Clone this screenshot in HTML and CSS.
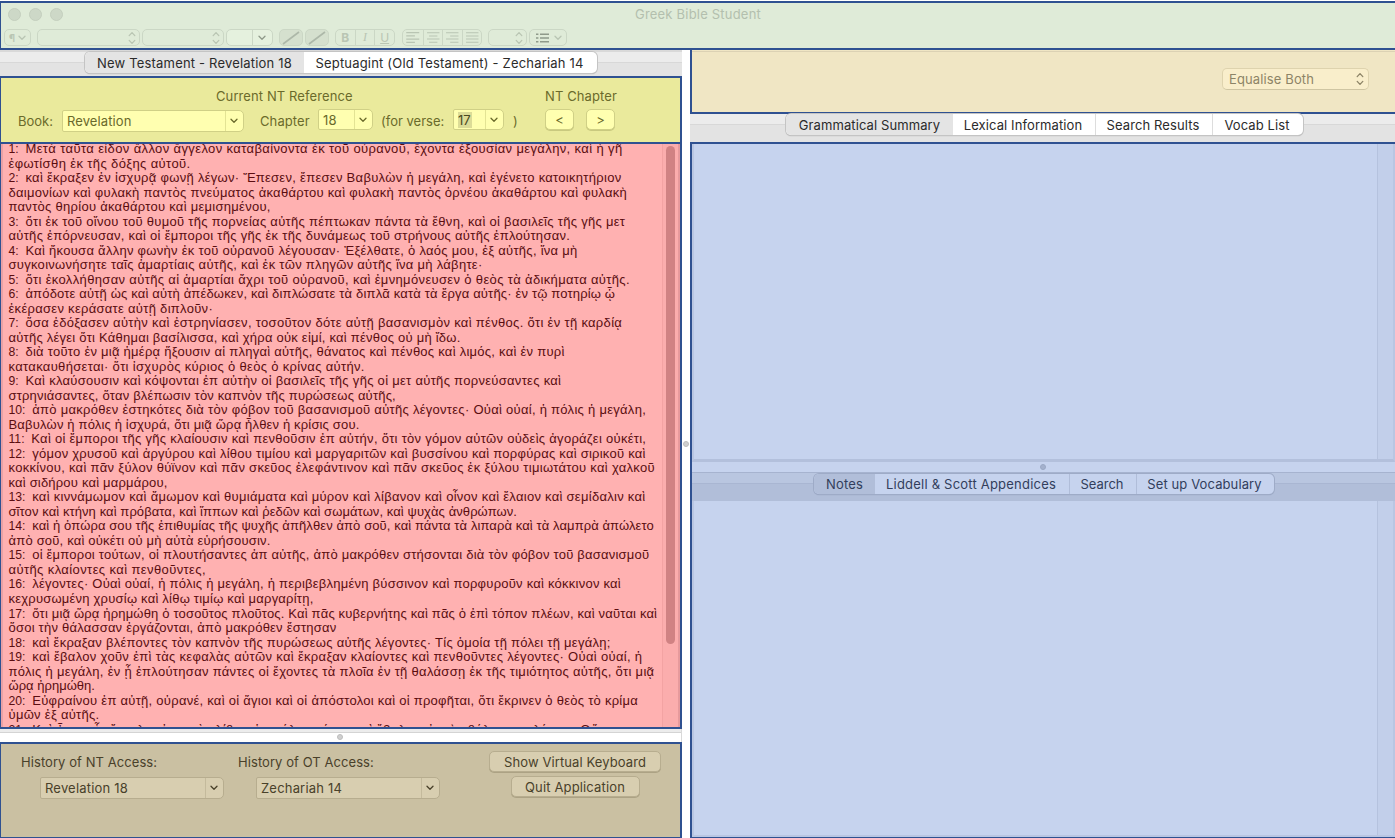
FILE: index.html
```html
<!DOCTYPE html>
<html lang="en">
<head>
<meta charset="utf-8">
<title>Greek Bible Student</title>
<link rel="stylesheet" href="styles.css">
</head>
<body>
<svg width="0" height="0" class="defs">
<symbol id="chev" viewBox="0 0 8 6"><path d="M1 1.2 4 4.2 7 1.2" fill="none" stroke="currentColor" stroke-width="1.3" stroke-linecap="round" stroke-linejoin="round"/></symbol>
<symbol id="updown" viewBox="0 0 8 14"><path d="M1.2 4.6 4 1.6 6.8 4.6M1.2 9.4 4 12.4 6.8 9.4" fill="none" stroke="currentColor" stroke-width="1.3" stroke-linecap="round" stroke-linejoin="round"/></symbol>
<symbol id="slash" viewBox="0 0 22 16"><path d="M3 14 19 2" fill="none" stroke="currentColor" stroke-width="1.6"/></symbol>
</svg>
<div class="app">
<header class="titlebar">
<div class="titlerow"><div class="lights"><i></i><i></i><i></i></div><h1>Greek Bible Student</h1></div>
<div class="toolbar">
<div class="tb tb-para"><span>¶</span><svg class="chev"><use href="#chev"/></svg></div>
<div class="tb tb-font"><svg class="ud"><use href="#updown"/></svg></div>
<div class="tb tb-face"><svg class="ud"><use href="#updown"/></svg></div>
<div class="tb tb-size"><svg class="chev"><use href="#chev"/></svg></div>
<div class="tb tb-well well1"><svg><use href="#slash"/></svg></div>
<div class="tb tb-well well2"><svg><use href="#slash"/></svg></div>
<div class="tb tb-biu"><b>B</b><em>I</em><u>U</u></div>
<div class="tb tb-align">
<svg viewBox="0 0 14 12"><path d="M1 1.5h12M1 4.5h8M1 7.5h12M1 10.5h8"/></svg>
<svg viewBox="0 0 14 12"><path d="M1 1.5h12M3 4.5h8M1 7.5h12M3 10.5h8"/></svg>
<svg viewBox="0 0 14 12"><path d="M1 1.5h12M5 4.5h8M1 7.5h12M5 10.5h8"/></svg>
<svg viewBox="0 0 14 12"><path d="M1 1.5h12M1 4.5h12M1 7.5h12M1 10.5h12"/></svg>
</div>
<div class="tb tb-space"><svg class="ud"><use href="#updown"/></svg></div>
<div class="tb tb-list"><svg class="list" viewBox="0 0 13 10"><path d="M0 1.2h2.4M0 5h2.4M0 8.8h2.4M4 1.2h9M4 5h9M4 8.8h9"/></svg><svg class="chev"><use href="#chev"/></svg></div>
</div>
</header>
<div class="body">
<main class="left">
<div class="tabstrip strip-l"><div class="tabs">
<div class="tab on t1">New Testament - Revelation 18</div>
<div class="tab t2">Septuagint (Old Testament) - Zechariah 14</div>
</div></div>
<section class="reference">
<div class="refhead"><span class="rh1">Current NT Reference</span><span class="rh2">NT Chapter</span></div>
<div class="refrow">
<label class="l-book">Book:</label>
<div class="combo c-book"><span>Revelation</span><svg class="chev"><use href="#chev"/></svg></div>
<label class="l-chap">Chapter</label>
<div class="combo c-chap"><span>18</span><svg class="chev"><use href="#chev"/></svg></div>
<label class="l-verse">(for verse:</label>
<div class="combo c-verse"><span class="sel">17</span><svg class="chev"><use href="#chev"/></svg></div>
<label class="l-close">)</label>
<button class="btn b-prev">&lt;</button>
<button class="btn b-next">&gt;</button>
</div>
</section>
<section class="verses" lang="el">
<div class="lines">
<p><b>1:  </b>Μετὰ ταῦτα εἶδον ἄλλον ἄγγελον καταβαίνοντα ἐκ τοῦ οὐρανοῦ, ἔχοντα ἐξουσίαν μεγάλην, καὶ ἡ γῆ</p>
<p>ἐφωτίσθη ἐκ τῆς δόξης αὐτοῦ.</p>
<p><b>2:  </b>καὶ ἔκραξεν ἐν ἰσχυρᾷ φωνῇ λέγων· Ἔπεσεν, ἔπεσεν Βαβυλὼν ἡ μεγάλη, καὶ ἐγένετο κατοικητήριον</p>
<p>δαιμονίων καὶ φυλακὴ παντὸς πνεύματος ἀκαθάρτου καὶ φυλακὴ παντὸς ὀρνέου ἀκαθάρτου καὶ φυλακὴ</p>
<p>παντὸς θηρίου ἀκαθάρτου καὶ μεμισημένου,</p>
<p><b>3:  </b>ὅτι ἐκ τοῦ οἴνου τοῦ θυμοῦ τῆς πορνείας αὐτῆς πέπτωκαν πάντα τὰ ἔθνη, καὶ οἱ βασιλεῖς τῆς γῆς μετ</p>
<p>αὐτῆς ἐπόρνευσαν, καὶ οἱ ἔμποροι τῆς γῆς ἐκ τῆς δυνάμεως τοῦ στρήνους αὐτῆς ἐπλούτησαν.</p>
<p><b>4:  </b>Καὶ ἤκουσα ἄλλην φωνὴν ἐκ τοῦ οὐρανοῦ λέγουσαν· Ἐξέλθατε, ὁ λαός μου, ἐξ αὐτῆς, ἵνα μὴ</p>
<p>συγκοινωνήσητε ταῖς ἁμαρτίαις αὐτῆς, καὶ ἐκ τῶν πληγῶν αὐτῆς ἵνα μὴ λάβητε·</p>
<p><b>5:  </b>ὅτι ἐκολλήθησαν αὐτῆς αἱ ἁμαρτίαι ἄχρι τοῦ οὐρανοῦ, καὶ ἐμνημόνευσεν ὁ θεὸς τὰ ἀδικήματα αὐτῆς.</p>
<p><b>6:  </b>ἀπόδοτε αὐτῇ ὡς καὶ αὐτὴ ἀπέδωκεν, καὶ διπλώσατε τὰ διπλᾶ κατὰ τὰ ἔργα αὐτῆς· ἐν τῷ ποτηρίῳ ᾧ</p>
<p>ἐκέρασεν κεράσατε αὐτῇ διπλοῦν·</p>
<p><b>7:  </b>ὅσα ἐδόξασεν αὑτὴν καὶ ἐστρηνίασεν, τοσοῦτον δότε αὐτῇ βασανισμὸν καὶ πένθος. ὅτι ἐν τῇ καρδίᾳ</p>
<p>αὐτῆς λέγει ὅτι Κάθημαι βασίλισσα, καὶ χήρα οὐκ εἰμί, καὶ πένθος οὐ μὴ ἴδω.</p>
<p><b>8:  </b>διὰ τοῦτο ἐν μιᾷ ἡμέρᾳ ἥξουσιν αἱ πληγαὶ αὐτῆς, θάνατος καὶ πένθος καὶ λιμός, καὶ ἐν πυρὶ</p>
<p>κατακαυθήσεται· ὅτι ἰσχυρὸς κύριος ὁ θεὸς ὁ κρίνας αὐτήν.</p>
<p><b>9:  </b>Καὶ κλαύσουσιν καὶ κόψονται ἐπ αὐτὴν οἱ βασιλεῖς τῆς γῆς οἱ μετ αὐτῆς πορνεύσαντες καὶ</p>
<p>στρηνιάσαντες, ὅταν βλέπωσιν τὸν καπνὸν τῆς πυρώσεως αὐτῆς,</p>
<p><b>10:  </b>ἀπὸ μακρόθεν ἑστηκότες διὰ τὸν φόβον τοῦ βασανισμοῦ αὐτῆς λέγοντες· Οὐαὶ οὐαί, ἡ πόλις ἡ μεγάλη,</p>
<p>Βαβυλὼν ἡ πόλις ἡ ἰσχυρά, ὅτι μιᾷ ὥρᾳ ἦλθεν ἡ κρίσις σου.</p>
<p><b>11:  </b>Καὶ οἱ ἔμποροι τῆς γῆς κλαίουσιν καὶ πενθοῦσιν ἐπ αὐτήν, ὅτι τὸν γόμον αὐτῶν οὐδεὶς ἀγοράζει οὐκέτι,</p>
<p><b>12:  </b>γόμον χρυσοῦ καὶ ἀργύρου καὶ λίθου τιμίου καὶ μαργαριτῶν καὶ βυσσίνου καὶ πορφύρας καὶ σιρικοῦ καὶ</p>
<p>κοκκίνου, καὶ πᾶν ξύλον θύϊνον καὶ πᾶν σκεῦος ἐλεφάντινον καὶ πᾶν σκεῦος ἐκ ξύλου τιμιωτάτου καὶ χαλκοῦ</p>
<p>καὶ σιδήρου καὶ μαρμάρου,</p>
<p><b>13:  </b>καὶ κιννάμωμον καὶ ἄμωμον καὶ θυμιάματα καὶ μύρον καὶ λίβανον καὶ οἶνον καὶ ἔλαιον καὶ σεμίδαλιν καὶ</p>
<p>σῖτον καὶ κτήνη καὶ πρόβατα, καὶ ἵππων καὶ ῥεδῶν καὶ σωμάτων, καὶ ψυχὰς ἀνθρώπων.</p>
<p><b>14:  </b>καὶ ἡ ὀπώρα σου τῆς ἐπιθυμίας τῆς ψυχῆς ἀπῆλθεν ἀπὸ σοῦ, καὶ πάντα τὰ λιπαρὰ καὶ τὰ λαμπρὰ ἀπώλετο</p>
<p>ἀπὸ σοῦ, καὶ οὐκέτι οὐ μὴ αὐτὰ εὑρήσουσιν.</p>
<p><b>15:  </b>οἱ ἔμποροι τούτων, οἱ πλουτήσαντες ἀπ αὐτῆς, ἀπὸ μακρόθεν στήσονται διὰ τὸν φόβον τοῦ βασανισμοῦ</p>
<p>αὐτῆς κλαίοντες καὶ πενθοῦντες,</p>
<p><b>16:  </b>λέγοντες· Οὐαὶ οὐαί, ἡ πόλις ἡ μεγάλη, ἡ περιβεβλημένη βύσσινον καὶ πορφυροῦν καὶ κόκκινον καὶ</p>
<p>κεχρυσωμένη χρυσίῳ καὶ λίθῳ τιμίῳ καὶ μαργαρίτῃ,</p>
<p><b>17:  </b>ὅτι μιᾷ ὥρᾳ ἠρημώθη ὁ τοσοῦτος πλοῦτος. Καὶ πᾶς κυβερνήτης καὶ πᾶς ὁ ἐπὶ τόπον πλέων, καὶ ναῦται καὶ</p>
<p>ὅσοι τὴν θάλασσαν ἐργάζονται, ἀπὸ μακρόθεν ἔστησαν</p>
<p><b>18:  </b>καὶ ἔκραξαν βλέποντες τὸν καπνὸν τῆς πυρώσεως αὐτῆς λέγοντες· Τίς ὁμοία τῇ πόλει τῇ μεγάλῃ;</p>
<p><b>19:  </b>καὶ ἔβαλον χοῦν ἐπὶ τὰς κεφαλὰς αὐτῶν καὶ ἔκραξαν κλαίοντες καὶ πενθοῦντες λέγοντες· Οὐαὶ οὐαί, ἡ</p>
<p>πόλις ἡ μεγάλη, ἐν ᾗ ἐπλούτησαν πάντες οἱ ἔχοντες τὰ πλοῖα ἐν τῇ θαλάσσῃ ἐκ τῆς τιμιότητος αὐτῆς, ὅτι μιᾷ</p>
<p>ὥρᾳ ἠρημώθη.</p>
<p><b>20:  </b>Εὐφραίνου ἐπ αὐτῇ, οὐρανέ, καὶ οἱ ἅγιοι καὶ οἱ ἀπόστολοι καὶ οἱ προφῆται, ὅτι ἔκρινεν ὁ θεὸς τὸ κρίμα</p>
<p>ὑμῶν ἐξ αὐτῆς.</p>
<p><b>21:  </b>Καὶ ἦρεν εἷς ἄγγελος ἰσχυρὸς λίθον ὡς μύλον μέγαν καὶ ἔβαλεν εἰς τὴν θάλασσαν λέγων· Οὕτως</p>
</div>
<div class="scroll"><i></i></div>
</section>
<div class="splitter split-l"><i></i></div>
<section class="history">
<div class="hist h1c"><label>History of NT Access:</label><div class="combo"><span>Revelation 18</span><svg class="chev"><use href="#chev"/></svg></div></div>
<div class="hist h2c"><label>History of OT Access:</label><div class="combo"><span>Zechariah 14</span><svg class="chev"><use href="#chev"/></svg></div></div>
<div class="actions"><button class="btn a1">Show Virtual Keyboard</button><button class="btn a2">Quit Application</button></div>
</section>
</main>
<div class="vsplit"><i></i></div>
<aside class="right">
<section class="options"><div class="popup"><span>Equalise Both</span><svg class="ud"><use href="#updown"/></svg></div></section>
<div class="tabstrip strip-r"><div class="tabs">
<div class="tab on r1">Grammatical Summary</div>
<div class="tab r2">Lexical Information</div>
<div class="tab r3">Search Results</div>
<div class="tab r4">Vocab List</div>
</div></div>
<section class="results">
<div class="pane p1"><div class="gutter"></div></div>
<div class="splitter split-r"><i></i></div>
<div class="tabstrip strip-b"><div class="tabs">
<div class="tab on n1">Notes</div>
<div class="tab n2">Liddell &amp; Scott Appendices</div>
<div class="tab n3">Search</div>
<div class="tab n4">Set up Vocabulary</div>
</div></div>
<div class="pane p2"><div class="gutter"></div></div>
</section>
</aside>
</div>
</div>
</body>
</html>
```
FILE: styles.css
```css
* { box-sizing: border-box; }
body { margin: 0; font: 13px/16px Inter, "Liberation Sans", sans-serif; letter-spacing: 0.1px; color: #2b2b2b; background: #fff; }
h1, p { margin: 0; font-weight: inherit; font-size: inherit; }
.defs { position: absolute; }
svg { display: block; flex: none; }
.chev { width: 8px; height: 6px; }
.ud { width: 8px; height: 14px; }
.app { width: 1395px; height: 838px; overflow: hidden; display: flex; flex-direction: column; padding-top: 1px; --line: #2f5191; }

.titlebar { height: 49px; border: 2px solid var(--line); border-width: 2px 0 2px 1px; background: #dfebd8; color: #b3bfae; }
.titlerow { height: 24px; display: flex; align-items: center; padding: 0 0 2px 7px; }
.lights { display: flex; gap: 8px; width: 61px; }
.lights i { width: 13px; height: 13px; border-radius: 50%; background: #cdd8c7; border: 1px solid #c4cfbe; }
h1 { margin-left: 566px; letter-spacing: 0.206px; white-space: nowrap; }
.toolbar { display: flex; padding: 2px 0 0 3px; color: #b9c5b3; }
.tb { height: 17px; border: 1px solid #cbd7c5; border-radius: 5px; display: flex; align-items: center; justify-content: flex-end; flex: none; }
.tb-para { width: 27px; justify-content: center; gap: 3px; font-weight: 700; font-size: 10px; }
.tb-font { width: 103px; margin-left: 6px; padding-right: 3px; }
.tb-face { width: 82px; margin-left: 2px; padding-right: 3px; }
.tb-size { width: 47px; margin-left: 2px; padding-right: 6px; color: #8f9a8a; background: linear-gradient(90deg, transparent 25px, #cbd7c5 25px, #cbd7c5 26px, transparent 26px), #e5f1de; }
.tb-well { width: 24px; background: #d5e0ce; justify-content: center; color: #adb8a8; }
.tb-well svg { width: 22px; height: 16px; }
.well1 { margin-left: 6px; }
.well2 { margin-left: 2px; }
.tb-biu { width: 60px; margin-left: 6px; font-size: 12px; }
.tb-biu > * { flex: 1; text-align: center; line-height: 15px; }
.tb-biu em { font-family: "Liberation Serif", serif; border: 1px solid #cbd7c5; border-width: 0 1px; }
.tb-align { width: 73px; margin-left: 7px; width: 80px; }
.tb-align svg { width: 19.5px; height: 15px; padding: 1px 2px; border-left: 1px solid #cbd7c5; }
.tb-align svg:first-child { border: 0; }
.tb-align path, .list path { fill: none; stroke: currentColor; stroke-width: 1; }
.tb-space { width: 39px; margin-left: 6px; padding-right: 3px; }
.tb-list { width: 38px; margin-left: 2px; padding: 0 4px 0 6px; justify-content: space-between; }
.list { width: 13px; height: 10px; color: #8f9a8a; }
.list path { stroke-width: 1.5; }

.body { flex: 1; display: flex; min-height: 0; }
.left { width: 682px; display: flex; flex-direction: column; }
.tabstrip { display: flex; flex: none; background: linear-gradient(#ececec 0 10px, #d8d8d8 10px 11px, #e3e3e3 11px); }
.tabs { display: flex; height: 21px; border-radius: 5px; background: #fff; box-shadow: 0 0 0 1px #c4c4c4, 0 1px 1px #999; overflow: hidden; }
.tab { display: flex; align-items: center; justify-content: center; white-space: nowrap; border-left: 1px solid #ddd; padding-right: 2px; }
.tab.on { background: #e4e4e4; border: 0; padding-right: 0; }
.tab.on + .tab { border: 0; }
.strip-l { height: 26px; border-top: 2px solid #d9d9d9; padding-left: 85px; letter-spacing: 0.188px; }
.t1 { width: 219px; }
.t2 { width: 293px; }

.reference { height: 68px; border: 2px solid var(--line); border-left-width: 1px; background: #eaea9c; color: #6a6a2b; flex: none; margin-bottom: -2px; }
.refhead { display: flex; height: 31px; padding: 10px 0 0 215px; }
.rh1 { width: 329px; }
.refrow { display: flex; height: 23px; padding-left: 17px; align-items: flex-start; }
.refrow label { margin-top: 4px; white-space: nowrap; flex: none; }
.combo { display: flex; align-items: center; justify-content: space-between; height: 22px; border: 1px solid #d0d086; border-radius: 2px 5px 5px 2px; padding: 0 5px 0 4px; flex: none; background: linear-gradient(270deg, transparent 17px, #e3e394 17px 18px, transparent 18px), #ffffb0; }
.refrow .l-book { width: 44px; letter-spacing: 0; }
.c-book { width: 182px; margin-top: 1px; }
.l-chap { width: 58px; margin-left: 16px; }
.c-chap { width: 55px; height: 21px; letter-spacing: 0.3px; }
.l-verse { width: 72px; margin-left: 8px; letter-spacing: 0; }
.c-verse { width: 51px; height: 21px; letter-spacing: 0; }
.c-verse .sel { background: #dcdc97; padding-right: 1px; color: #4b4b22; }
.l-close { margin-left: 9px; width: 32px; }
.btn { font: inherit; letter-spacing: inherit; color: inherit; border: 1px solid #d0d086; border-radius: 5px; background: #ffffb0; padding: 0; height: 21px; display: flex; align-items: center; justify-content: center; box-shadow: 0 1px 0 #c9c97f; }
.b-prev { width: 29px; }
.b-next { width: 29px; margin-left: 12px; }

.verses { height: 587px; border: 2px solid var(--line); border-left-width: 1px; background: #ffb1b1; color: #5a0d10; display: flex; justify-content: space-between; overflow: hidden; flex: none; box-shadow: inset 2px 0 #e9a1a6; }
.lines { padding-left: 7.5px; font: 13px/14.53px "Liberation Sans", Arial, sans-serif; margin-top: -2px; }
.lines p { height: 14.53px; white-space: pre; }
.lines b { font-weight: 400; font-size: 12.2px; letter-spacing: 0; }
.lines p:nth-child(1) { letter-spacing: 0.378px; }
.lines p:nth-child(2) { letter-spacing: 0.38px; }
.lines p:nth-child(3) { letter-spacing: 0.295px; }
.lines p:nth-child(4) { letter-spacing: 0.28px; }
.lines p:nth-child(5) { letter-spacing: 0.282px; }
.lines p:nth-child(6) { letter-spacing: 0.294px; }
.lines p:nth-child(7) { letter-spacing: 0.286px; }
.lines p:nth-child(8) { letter-spacing: 0.278px; }
.lines p:nth-child(9) { letter-spacing: 0.285px; }
.lines p:nth-child(10) { letter-spacing: 0.348px; }
.lines p:nth-child(11) { letter-spacing: 0.165px; }
.lines p:nth-child(12) { letter-spacing: 0.295px; }
.lines p:nth-child(13) { letter-spacing: 0.313px; }
.lines p:nth-child(14) { letter-spacing: 0.231px; }
.lines p:nth-child(15) { letter-spacing: 0.261px; }
.lines p:nth-child(16) { letter-spacing: 0.327px; }
.lines p:nth-child(17) { letter-spacing: 0.297px; }
.lines p:nth-child(18) { letter-spacing: 0.186px; }
.lines p:nth-child(19) { letter-spacing: 0.282px; }
.lines p:nth-child(20) { letter-spacing: 0.162px; }
.lines p:nth-child(21) { letter-spacing: 0.28px; }
.lines p:nth-child(22) { letter-spacing: 0.251px; }
.lines p:nth-child(23) { letter-spacing: 0.296px; }
.lines p:nth-child(24) { letter-spacing: 0.193px; }
.lines p:nth-child(25) { letter-spacing: 0.281px; }
.lines p:nth-child(26) { letter-spacing: 0.085px; }
.lines p:nth-child(27) { letter-spacing: 0.093px; }
.lines p:nth-child(28) { letter-spacing: 0.2px; }
.lines p:nth-child(29) { letter-spacing: 0.22px; }
.lines p:nth-child(30) { letter-spacing: 0.399px; }
.lines p:nth-child(31) { letter-spacing: 0.243px; }
.lines p:nth-child(32) { letter-spacing: 0.221px; }
.lines p:nth-child(33) { letter-spacing: 0.17px; }
.lines p:nth-child(34) { letter-spacing: 0.221px; }
.lines p:nth-child(35) { letter-spacing: 0.257px; }
.lines p:nth-child(36) { letter-spacing: 0.325px; }
.lines p:nth-child(37) { letter-spacing: 0.304px; }
.lines p:nth-child(38) { letter-spacing: 0.02px; }
.lines p:nth-child(39) { letter-spacing: 0.267px; }
.lines p:nth-child(40) { letter-spacing: 0.29px; }
.lines p:nth-child(41) { letter-spacing: 0.442px; }
.scroll { width: 18px; border-left: 1px solid #f3a3a3; border-right: 2px solid #e79a9c; padding: 2px 0 0 3px; flex: none; background: #fbadad; }
.scroll i { display: block; width: 9px; height: 498px; border-radius: 5px; background: #d08283; }
.splitter { display: flex; justify-content: center; align-items: center; flex: none; }
.splitter i, .vsplit i { width: 6px; height: 6px; border-radius: 50%; background: #cfcfcf; border: 1px solid #bdbdbd; }
.split-l { height: 13px; padding: 3px 1px 0 0; background: linear-gradient(#ececec 3px, #d4d4d4 3px 4px, #fff 4px); border-right: 1px solid #d9d9d9; }
.history { flex: 1; border: 2px solid var(--line); border-width: 2px 2px 1px 1px; background: #cac0a2; color: #49412a; display: flex; padding: 10px 0 0 20px; }
.history .combo { border-color: #b7ad8f; background: linear-gradient(270deg, transparent 17px, #c4ba9c 17px 18px, transparent 18px), #d8ceb0; width: 184px; margin: 7px 0 0 19px; letter-spacing: 0.19px; }
.history label { display: block; height: 16px; letter-spacing: 0.07px; }
.hist { width: 217px; }
.h2c { width: 251px; }
.h2c .combo { margin-left: 18px; }
.actions { display: flex; flex-direction: column; align-items: center; width: 172px; margin-top: -3px; gap: 4px; }
.actions .btn { background: #d8ceb0; border-color: #b7ad8f; box-shadow: 0 1px 0 #aca284; }
.a1 { width: 172px; }
.a2 { width: 129px; letter-spacing: 0.149px; }

.vsplit { width: 8px; display: flex; align-items: center; justify-content: center; }
.right { flex: 1; display: flex; flex-direction: column; }
.options { height: 64px; border: 2px solid var(--line); border-width: 0 0 2px 2px; background: linear-gradient(#f0e6c4 1px, #dcd2b4 1px 2px, #f0e6c4 2px); display: flex; justify-content: flex-end; padding: 18px 26px 0 0; color: #8d8467; flex: none; }
.popup { width: 147px; height: 22px; border: 1px solid #ded3ae; border-bottom-color: #cfc5a2; border-radius: 5px; background: #f9eecb; display: flex; align-items: center; justify-content: space-between; padding: 0 4px 0 6px; letter-spacing: 0.123px; }
.strip-r { height: 28px; padding-left: 96px; }
.r1 { width: 167px; }
.r2 { width: 142px; }
.r3 { width: 117px; }
.r4 { width: 91px; }
.results { flex: 1; border: 2px solid var(--line); border-width: 2px 0 1px 2px; display: flex; flex-direction: column; background: #c6d3ee; color: #323e5c; }
.pane { display: flex; justify-content: flex-end; border: 2px solid #b9c6e2; border-width: 0 2px 2px 2px; }
.gutter { width: 16px; border-left: 1px solid #b5c2de; background: #c2cfea; }
.p1 { height: 318px; border-bottom: 3px solid #b3c0dc; flex: none; }
.p2 { flex: 1; }
.split-r { height: 10px; padding-right: 1px; }
.split-r i { background: #a4b1cd; border-color: #9aa8c4; }
.strip-b { height: 29px; border-top: 1px solid #a6b3cf; padding: 1px 0 0 122px; background: linear-gradient(#b9c6e0 10px, #a9b6d2 10px 11px, #b1bed9 11px); }
.strip-b .tabs { background: #c6d3ee; box-shadow: 0 0 0 1px #9eabc7, 0 1px 1px #8592ae; height: 20px; }
.strip-b .tab { border-color: #b0bdd9; }
.strip-b .on { background: #b1bed9; }
.n1 { width: 61px; letter-spacing: 0.169px; }
.n2 { width: 194px; letter-spacing: 0.211px; }
.n3 { width: 67px; letter-spacing: 0; }
.n4 { width: 138px; }
```
